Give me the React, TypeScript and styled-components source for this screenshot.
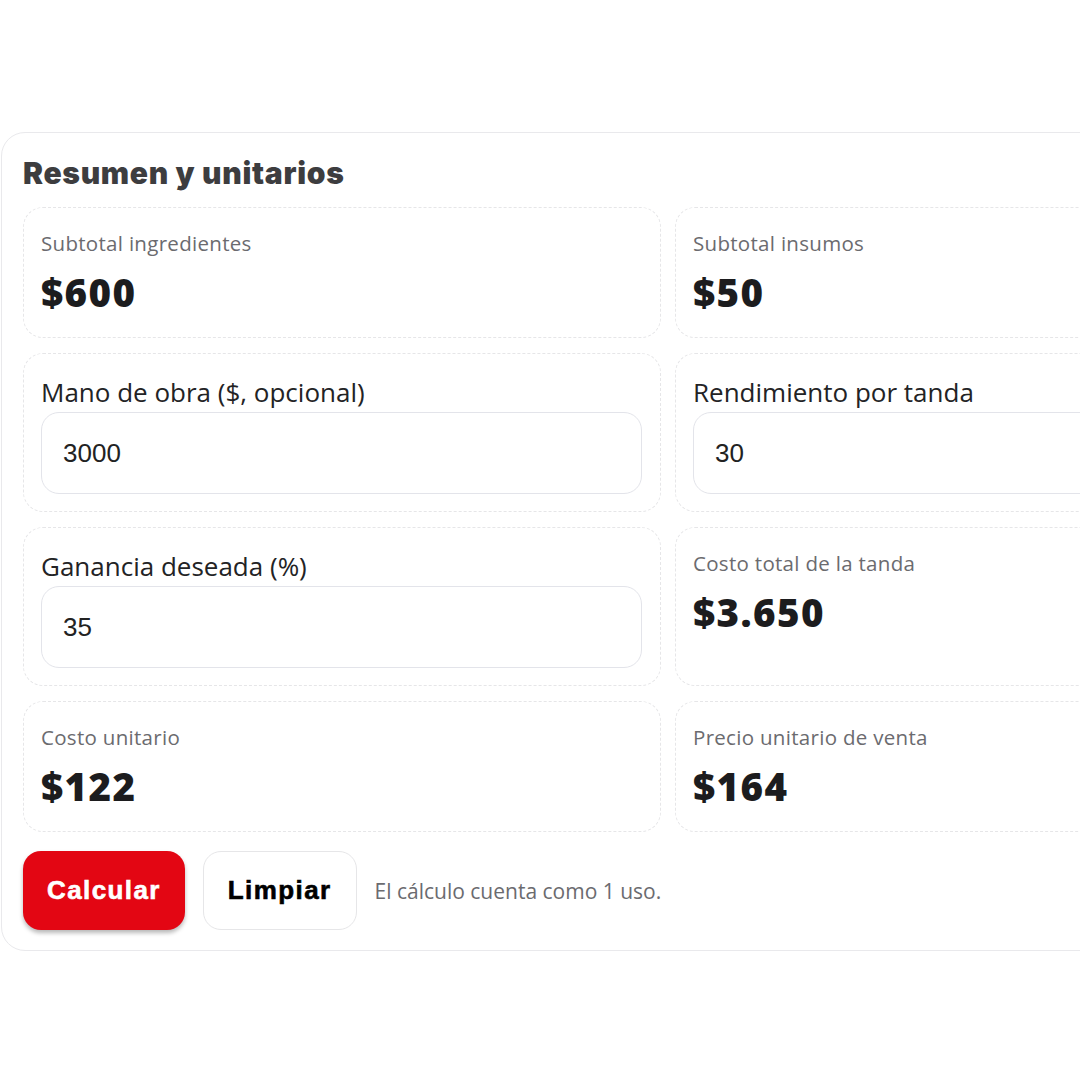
import React from "react"
import styled, {createGlobalStyle} from "styled-components"

const GlobalStyle = createGlobalStyle`
  html, body {
    margin: 0;
    padding: 0;
    background: #ffffff;
    overflow: hidden;
  }
  body {
    font-family: "Open Sans", "Noto Sans", sans-serif;
  }
`

const Page = styled.div`
  width: 1080px;
  height: 1080px;
  padding: 132px 0 0 1px;
  box-sizing: border-box;
  overflow: hidden;
`

const Card = styled.section`
  width: 1340px;
  box-sizing: border-box;
  border: 1.5px solid #e9e9ec;
  border-radius: 24px;
  padding: 20px 21px 20px 21px;
  background: #fff;
`

const Title = styled.h2`
  margin: 0 0 14px 0;
  font-family: "Inter", "Noto Sans", sans-serif;
  font-weight: 900;
  font-size: 30px;
  line-height: 40px;
  letter-spacing: 0.7px;
  color: #3d3d3f;
`

const Grid = styled.div`
  display: grid;
  grid-template-columns: 638px 638px;
  column-gap: 14px;
  row-gap: 15px;
`

const Cell = styled.div<{ $tall?: boolean }>`
  box-sizing: border-box;
  height: ${p => (p.$tall ? 159 : 131)}px;
  border: 1.5px dashed #e6e6e8;
  border-radius: 20px;
  padding: 22px 18px 0 17px;
  display: flex;
  flex-direction: column;
`

const Label = styled.div`
  font-size: 20.5px;
  line-height: 26px;
  letter-spacing: 0.3px;
  color: #6b6b6f;
`

const Value = styled.div`
  margin-top: 14px;
  font-family: "Open Sans", sans-serif;
  font-weight: 800;
  font-size: 38.5px;
  line-height: 44px;
  letter-spacing: 1.4px;
  color: #1c1c1e;
`

const FieldLabel = styled.label`
  font-size: 26px;
  line-height: 32px;
  color: #232325;
  margin-bottom: 4px;
`

const Input = styled.input`
  box-sizing: border-box;
  width: 601px;
  height: 82px;
  border: 1.5px solid #e3e4ea;
  border-radius: 18px;
  padding: 0 21px;
  font-family: "Liberation Sans", Arial, sans-serif;
  font-size: 26px;
  color: #222;
  background: #fff;
  outline: none;
`

const Actions = styled.div`
  display: flex;
  align-items: center;
  gap: 18px;
  margin-top: 19px;
`

const Button = styled.button<{ $primary?: boolean }>`
  height: 79px;
  padding: 0 24px;
  border-radius: 18px;
  border: ${p => (p.$primary ? "none" : "1.5px solid #e6e6e8")};
  background: ${p => (p.$primary ? "#e30613" : "#ffffff")};
  color: ${p => (p.$primary ? "#ffffff" : "#000000")};
  font-family: "Liberation Sans", Arial, sans-serif;
  font-weight: 700;
  font-size: 26px;
  letter-spacing: 1.4px;
  -webkit-text-stroke: 0.6px currentColor;
  box-shadow: ${p => (p.$primary ? "0 3px 4px rgba(0,0,0,0.28)" : "none")};
  cursor: pointer;
`

const Note = styled.span`
  font-size: 21px;
  color: #6b6b6f;
`

function Stat({label, value}: { label: string, value: string }) {
    return (
        <Cell>
            <Label>{label}</Label>
            <Value>{value}</Value>
        </Cell>
    )
}

function Field({label, value}: { label: string, value: string }) {
    return (
        <Cell $tall>
            <FieldLabel>{label}</FieldLabel>
            <Input defaultValue={value}/>
        </Cell>
    )
}

export default function App() {
    return (
        <Page>
            <GlobalStyle/>
            <Card>
                <Title>Resumen y unitarios</Title>
                <Grid>
                    <Stat label="Subtotal ingredientes" value="$600"/>
                    <Stat label="Subtotal insumos" value="$50"/>
                    <Field label="Mano de obra ($, opcional)" value="3000"/>
                    <Field label="Rendimiento por tanda" value="30"/>
                    <Field label="Ganancia deseada (%)" value="35"/>
                    <Cell $tall>
                        <Label>Costo total de la tanda</Label>
                        <Value>$3.650</Value>
                    </Cell>
                    <Stat label="Costo unitario" value="$122"/>
                    <Stat label="Precio unitario de venta" value="$164"/>
                </Grid>
                <Actions>
                    <Button $primary>Calcular</Button>
                    <Button>Limpiar</Button>
                    <Note>El cálculo cuenta como 1 uso.</Note>
                </Actions>
            </Card>
        </Page>
    )
}
